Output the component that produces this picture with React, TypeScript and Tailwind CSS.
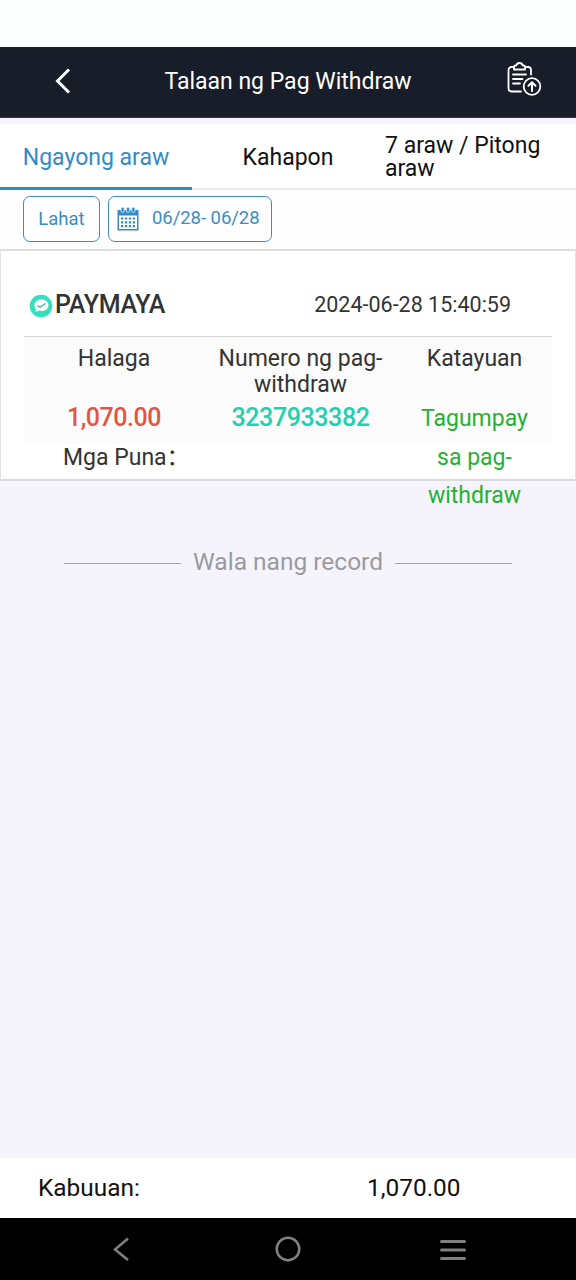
import clsx from 'clsx'

const TABS = [
  { id: 'today', label: 'Ngayong araw' },
  { id: 'yesterday', label: 'Kahapon' },
  { id: 'week', label: '7 araw / Pitong araw' },
]

const RECORD = {
  method: 'PAYMAYA',
  createdAt: '2024-06-28 15:40:59',
  amount: '1,070.00',
  orderNo: '3237933382',
  status: 'Tagumpay sa pag-withdraw',
}

function BackIcon() {
  return (
    <svg width="16" height="26" viewBox="0 0 16 26" fill="none" stroke="#fff" strokeWidth="3">
      <path d="M14 1.5 2.5 13 14 24.5" />
    </svg>
  )
}

function ClipboardUploadIcon() {
  return (
    <svg width="36" height="36" viewBox="0 0 36 36" fill="none" stroke="#fff" strokeWidth="1.8" strokeLinecap="round" strokeLinejoin="round">
      <path d="M7.5 6H5.5A3 3 0 0 0 2.5 9v18.500a3 3 0 0 0 3 3h9.500" />
      <path d="M19.500 6h2.500a3 3 0 0 1 3 3v4.500" />
      <path d="M8 8.500V6q0-1.500 1.500-1.500h.7Q11 2 13.500 2t3.300 2.500h.7Q19 4.500 19 6v2.500z" />
      <path d="M7 13.500h13M7 18h9.500M7 22.500h7" />
      <circle cx="26" cy="25.500" r="8.300" />
      <path d="M26 30v-8.500M22.500 24.700l3.500-3.500 3.500 3.500" strokeWidth="2" />
    </svg>
  )
}

function CalendarIcon() {
  return (
    <svg width="22" height="24" viewBox="0 0 22 24">
      <path fill="#2f8dcd" fillRule="evenodd" d="M.5 3h21V23.500H.5zM2 8.500v13.500h18V8.500z" />
      <g fill="#2f8dcd" stroke="#fff" strokeWidth=".7">
        <rect x="4" y=".3" width="3.200" height="5" rx="1.300" />
        <rect x="9.400" y=".3" width="3.200" height="5" rx="1.300" />
        <rect x="14.800" y=".3" width="3.200" height="5" rx="1.300" />
      </g>
      <g stroke="#2f8dcd" strokeWidth="2.200" strokeDasharray="2.300 1.600">
        <path d="M4 11.500H18.200M4 15.300H18.200M4 19.100H18.200" />
      </g>
    </svg>
  )
}

function PaymayaLogo() {
  return (
    <svg width="24" height="24" viewBox="0 0 24 24">
      <circle cx="12" cy="12" r="11.300" fill="#35dfbd" />
      <path fill="#fff" d="M12.500 5.500c4 0 7 2.400 7 5.700s-3 5.800-7 5.800c-1 0-1.900-.1-2.700-.4L6.500 18l.5-2.700c-1-1-1.600-2.300-1.600-3.800 0-3.500 3.100-6 7.100-6z" />
      <path d="m8.500 11.500 2.700 1.700 5.300-3.700" fill="none" stroke="#35b99c" strokeWidth="1.300" />
    </svg>
  )
}

function Header() {
  return (
    <header className="h-[71px] bg-[#171e2a] border-b border-[#33343c] flex items-center">
      <button className="w-[126px] pb-0.5 flex justify-center">
        <BackIcon />
      </button>
      <h1 className="flex-1 text-center text-[23px] text-white whitespace-nowrap">Talaan ng Pag Withdraw</h1>
      <button className="w-[126px] pl-[56px] pb-1.5">
        <ClipboardUploadIcon />
      </button>
    </header>
  )
}

function Tabs({ active }: { active: string }) {
  return (
    <nav className="mt-1.5 h-[66px] bg-white grid grid-cols-3">
      {TABS.map(tab => (
        <button
          key={tab.id}
          className={clsx(
            'flex items-center justify-center text-[23px] leading-[23px]',
            tab.id === active ? 'pt-[3px] border-b-[3px] border-[#318bc8] text-[#318bc8]' : 'pt-0.5 border-b-2 border-[#e9e9e9] text-[#111]',
          )}
        >
          <span className={clsx(tab.id === 'week' && 'w-[190px] text-left')}>{tab.label}</span>
        </button>
      ))}
    </nav>
  )
}

function Filters() {
  return (
    <div className="h-[59px] bg-[#fefefe] px-[23px] pt-1.5 flex gap-2 text-[18.5px] text-[#3b8dc0]">
      <button className="w-[77px] h-[46px] pt-0.5 rounded-[7px] border border-[#3f8dbb]">Lahat</button>
      <button className="w-[164px] h-[46px] rounded-[7px] border border-[#3f8dbb] pl-2 flex items-center gap-[13px] whitespace-nowrap">
        <CalendarIcon />
        <span className="tracking-[-0.05px]">06/28- 06/28</span>
      </button>
    </div>
  )
}

function RecordCard() {
  return (
    <section className="h-[232px] bg-white border-t-2 border-b-2 border-x border-t-[#dedede] border-b-[#d9d9de] border-x-[#e2e2e2] px-[23px] text-[#333]">
      <div className="h-[86px] pt-6 flex items-center justify-between border-b border-[#d8d8d8]">
        <div className="flex items-center pl-[5px] gap-[2px]">
          <PaymayaLogo />
          <span className="pb-px text-[25px] font-medium tracking-[-0.3px]">{RECORD.method}</span>
        </div>
        <time className="pr-[41px] text-[21.5px]">{RECORD.createdAt}</time>
      </div>
      <div className="h-[107px] bg-[#fbfbfb] flex text-center text-[23px] leading-[26px]">
        <div className="w-[180px] pt-[9px]">
          <p className="h-[53px]">Halaga</p>
          <p className="leading-[38px] text-[25px] font-medium tracking-[-0.45px] text-[#df5744]">{RECORD.amount}</p>
        </div>
        <div className="w-[193px] pt-[9px]">
          <p className="h-[53px]">Numero ng pag-withdraw</p>
          <p className="leading-[38px] text-[25px] font-medium tracking-[-0.4px] text-[#20d0af]">{RECORD.orderNo}</p>
        </div>
        <div className="w-[155px] pt-[9px]">
          <p className="h-[53px]">Katayuan</p>
          {/* long status text runs over the card's lower edge */}
          <p className="relative mx-auto w-[120px] pt-px leading-[38.500px] text-[#1fb233]">{RECORD.status}</p>
        </div>
      </div>
      <p className="pl-[39px] pt-px text-[23px] leading-[26px]">Mga Puna：</p>
    </section>
  )
}

function EndOfList() {
  return (
    <div className="mt-[63px] px-16 flex items-center gap-3 text-[#9a9a9f]">
      <span className="flex-1 h-px mt-0.5 bg-[#a6a6ab]" />
      <span className="text-[24.5px] leading-9">Wala nang record</span>
      <span className="flex-1 h-px mt-0.5 bg-[#a6a6ab]" />
    </div>
  )
}

function SystemNav() {
  return (
    <div className="h-[62px] bg-black grid grid-cols-[1fr_92px_1fr] items-center text-[#808080]">
      <svg className="ml-[112px]" width="18" height="24" viewBox="0 0 18 24" fill="none" stroke="currentColor" strokeWidth="2.500">
        <path d="M16 1.500 3 12.500l13 10.500" />
      </svg>
      <svg className="mx-auto" width="26" height="26" viewBox="0 0 26 26" fill="none" stroke="currentColor" strokeWidth="2.500">
        <circle cx="13" cy="13" r="11.300" />
      </svg>
      <svg className="ml-[106px] mt-0.5" width="26" height="22" viewBox="0 0 26 22" stroke="currentColor" strokeWidth="3" strokeLinecap="round">
        <path d="M1.500 2.500h23M1.500 11h23M1.500 19.500h23" />
      </svg>
    </div>
  )
}

export default function App() {
  return (
    <div className="h-[1280px] w-[576px] flex flex-col overflow-hidden bg-[#f5f4fc] font-['Roboto','Noto_Sans_CJK_SC',sans-serif]">
      <div className="h-[47px] bg-[#fdfffe]" />
      <Header />
      <Tabs active="today" />
      <Filters />
      <RecordCard />
      <EndOfList />
      <footer className="mt-auto h-[60px] bg-white grid grid-cols-2 items-center text-[24.4px] text-[#111]">
        <span className="pl-[38px]">Kabuuan:</span>
        <span className="pl-[79px]">{RECORD.amount}</span>
      </footer>
      <SystemNav />
    </div>
  )
}
